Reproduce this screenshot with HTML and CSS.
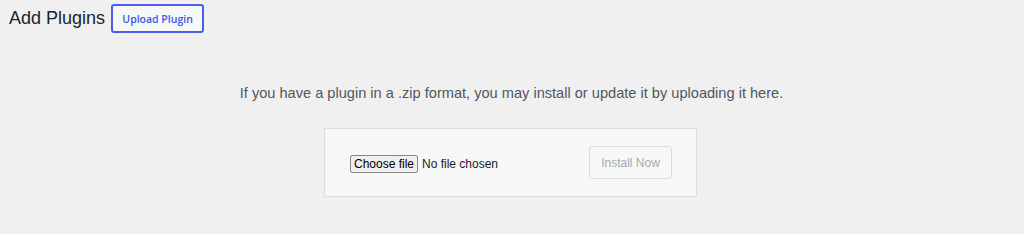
FILE: index.html
```html
<!DOCTYPE html>
<html lang="en">
<head>
<meta charset="utf-8">
<title>Add Plugins</title>
<link rel="stylesheet" href="styles.css">
</head>
<body>
<div class="wrap">
  <div class="head">
    <h1 class="title">Add Plugins</h1>
    <button class="upload-btn" type="button">Upload Plugin</button>
  </div>
  <p class="help">If you have a plugin in a .zip format, you may install or update it by uploading it here.</p>
  <div class="form-row">
    <form class="upload-form">
      <div class="file-field">
        <button class="choose" type="button">Choose file</button>
        <span class="nofile">No file chosen</span>
      </div>
      <button class="install" type="button" disabled>Install Now</button>
    </form>
  </div>
</div>
</body>
</html>
```

FILE: styles.css
```css
html, body {
  margin: 0;
  padding: 0;
  background: #f0f0f1;
}
body {
  font-family: "Liberation Sans", Arial, sans-serif;
  color: #1d2327;
  width: 1024px;
  height: 234px;
  overflow: hidden;
}
.wrap {
  padding: 4px 0 0 9px;
}
.head {
  display: flex;
  align-items: center;
  gap: 6px;
  height: 29px;
}
.title {
  margin: 0;
  font-size: 18px;
  font-weight: 400;
  color: #1d2327;
  line-height: 29px;
}
.upload-btn {
  box-sizing: border-box;
  height: 29px;
  width: 93px;
  padding: 0;
  border: 2px solid #4a5fe8;
  border-radius: 3px;
  background: #f6f7f7;
  color: #3858e9;
  font-family: "Open Sans", "Liberation Sans", Arial, sans-serif;
  font-size: 10.5px;
  font-weight: 600;
}
.help {
  margin: 50px 0 0;
  padding-right: 10px;
  text-align: center;
  font-size: 14.6px;
  line-height: 20px;
  color: #50575e;
}
.form-row {
  display: flex;
  justify-content: center;
  margin-top: 25px;
  padding-right: 12px;
}
.upload-form {
  box-sizing: border-box;
  width: 373px;
  height: 69px;
  border: 1px solid #dcdcde;
  background: #f6f7f7;
  display: flex;
  align-items: center;
  justify-content: space-between;
  padding: 0 24px 0 25px;
}
.file-field {
  display: flex;
  align-items: center;
  gap: 4px;
  margin-top: 2px;
}
.choose {
  box-sizing: border-box;
  height: 18px;
  width: 68px;
  padding: 0;
  border: 1px solid #858585;
  border-radius: 2px;
  background: #efefef;
  color: #000;
  font-family: "Liberation Sans", Arial, sans-serif;
  font-size: 12px;
}
.nofile {
  font-size: 12px;
  color: #1d1d1d;
}
.install {
  box-sizing: border-box;
  width: 83px;
  height: 33px;
  padding: 0;
  border: 1px solid #dcdcde;
  border-radius: 3px;
  background: #f6f7f7;
  color: #a7aaad;
  font-family: "Liberation Sans", Arial, sans-serif;
  font-size: 12px;
}
```
